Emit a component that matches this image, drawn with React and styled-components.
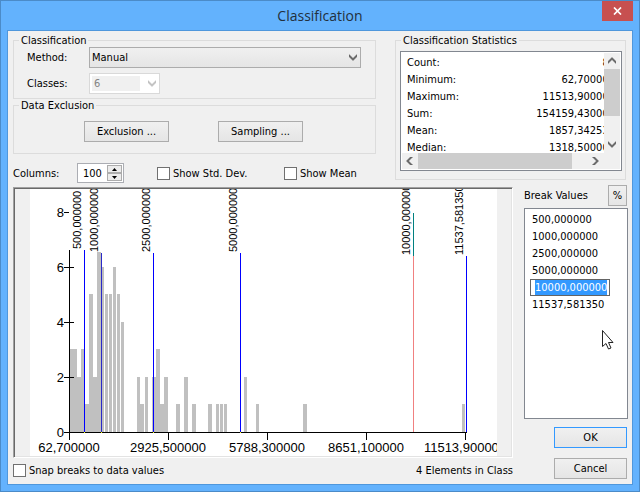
import React, { useEffect, useRef } from "react";
import styled, { createGlobalStyle } from "styled-components";

const GlobalStyle = createGlobalStyle`
  * { box-sizing: border-box; }
  body {
    margin: 0;
    color: #000;
    font: 11px/13px "DejaVu Sans Condensed", "Noto Sans", sans-serif;
  }
  button, input, select { font: inherit; color: inherit; margin: 0; }
`;

const Window = styled.main`
  position: relative;
  display: flex;
  flex-direction: column;
  min-height: 100vh;
  padding: 0 6px 6px;
  background: #63b2fd;
  border: 1px solid #4b8bc8;
`;

const TitleBar = styled.header`
  display: flex;
  justify-content: center;
  height: 29px;
`;

const Title = styled.h1`
  margin: 0;
  font: 400 14px/30px "Open Sans", sans-serif;
  color: #22303c;
`;

const CloseButton = styled.button`
  position: absolute;
  top: 0;
  right: 6px;
  width: 31px;
  height: 20px;
  padding: 0;
  border: 0;
  background: #c75050;
  display: grid;
  place-items: center;
`;

const Client = styled.div`
  flex: 1;
  padding: 3px 4px 4px 5px;
  background: #f0f0f0;
  border: 1px solid #4f97dc;
`;

const TopArea = styled.div`
  display: flex;
  gap: 19px;
  padding-right: 2px;
`;

const Settings = styled.div`
  flex: 1;
  min-width: 0;
`;

const Group = styled.fieldset`
  min-width: 0;
  margin: 0;
  padding: 0;
  border: 1px solid #dcdcdc;
`;

const GroupBody = styled.div`
  padding: ${(p) => p.$pad};
`;

const StatsGroup = styled(Group)`
  width: 231px;
  align-self: flex-start;
`;

const Legend = styled.legend`
  height: 13px;
  margin-left: 5px;
  padding: 0 2px;
`;

const Field = styled.div`
  display: flex;
  align-items: center;
  height: 21px;
  & + & { margin-top: 5px; }
`;

const FieldLabel = styled.label`
  width: 62px;
`;

const SelectBox = styled.div`
  position: relative;
  width: ${(p) => p.$width};
  height: 21px;
  svg {
    position: absolute;
    right: 4px;
    top: 7px;
    pointer-events: none;
  }
`;

const Select = styled.select`
  appearance: none;
  width: 100%;
  height: 100%;
  padding: 0 2px;
  border: 1px solid #acacac;
  border-radius: 0;
  background: linear-gradient(#f0f0f0, #e5e5e5);
  &:disabled {
    padding: 0 4px;
    color: #838383;
    opacity: 1;
    border-color: #d9d9d9;
    background: linear-gradient(#f0f0f0, #f0f0f0) 2px 2px / 48px 15px no-repeat #fff;
  }
`;

const ButtonRow = styled.div`
  display: flex;
  gap: 49px;
`;

const Button = styled.button`
  width: ${(p) => p.$width};
  height: 21px;
  padding: 0;
  border: 1px solid ${(p) => (p.$primary ? "#3399ff" : "#acacac")};
  background: linear-gradient(#f0f0f0, #e5e5e5);
`;

const OptionRow = styled.div`
  display: flex;
  align-items: center;
  height: 20px;
  margin-top: 9px;
`;

const OptionLabel = styled.label`
  width: 64px;
`;

const Spinner = styled.div`
  display: flex;
  width: 47px;
  height: 20px;
  margin-right: 33px;
  padding: 1px;
  background: #fff;
  border: 1px solid #abadb3;
`;

const SpinnerInput = styled.input`
  flex: 1;
  min-width: 0;
  padding: 0 0 0 4px;
  border: 0;
  outline: 0;
  background: none;
`;

const SpinnerButtons = styled.div`
  display: flex;
  flex-direction: column;
  width: 15px;
`;

const SpinnerButton = styled.button`
  flex: 1;
  display: grid;
  place-items: center;
  padding: 0;
  border: 1px solid #acacac;
  background: #ececec;
`;

const CheckLabel = styled.label`
  display: flex;
  align-items: center;
  gap: 3px;
  width: ${(p) => p.$width};
`;

const Checkbox = styled.input`
  appearance: none;
  width: 13px;
  height: 13px;
  background: #fff;
  border: 1px solid #707070;
`;

const StatsFrame = styled.div`
  display: grid;
  grid-template: 1fr 16px / 1fr 16px;
  height: 120px;
  padding: 1px;
  border: 1px solid #828790;
  background: #fff;
`;

const StatsView = styled.div`
  overflow: hidden;
  padding: 1px 0 0 5px;
`;

const StatsTable = styled.table`
  width: calc(100% + 11px);
  border-collapse: collapse;
  white-space: nowrap;
  th, td { height: 17px; padding: 0; }
  th { font-weight: 400; text-align: left; }
  td { text-align: right; }
`;

const ScrollBar = styled.div`
  display: flex;
  flex-direction: ${(p) => (p.$vertical ? "column" : "row")};
  background: #f0f0f0;
`;

const ScrollButton = styled.button`
  flex: 0 0 16px;
  height: 16px;
  display: grid;
  place-items: center;
  padding: 0;
  border: 0;
  background: none;
`;

const ScrollTrack = styled.div`
  flex: 1;
  display: flex;
  flex-direction: inherit;
`;

const ScrollThumb = styled.div`
  flex: 0 0 ${(p) => p.$size};
  background: #cdcdcd;
`;

const Corner = styled.div`
  background: #f0f0f0;
`;

const BottomArea = styled.div`
  display: flex;
  gap: 11px;
  margin-top: 2px;
`;

const ChartColumn = styled.section`
  flex: 1;
  min-width: 0;
  padding-top: 2px;
`;

const ChartFrame = styled.div`
  padding: 1px 15px 1px 16px;
  border: 1px solid;
  border-color: #a0a0a0 #fff #fff #a0a0a0;
  box-shadow: inset 1px 1px #696969, inset -1px -1px #e3e3e3;
  svg {
    display: block;
    width: 100%;
    background: #fff;
  }
`;

const StatusRow = styled.div`
  display: flex;
  justify-content: space-between;
  align-items: center;
  margin-top: 6px;
`;

const BreakColumn = styled.section`
  display: flex;
  flex-direction: column;
  width: 104px;
`;

const BreakHeader = styled.div`
  display: flex;
  align-items: center;
  justify-content: space-between;
  padding-right: 1px;
  margin-bottom: 2px;
  white-space: nowrap;
`;

const BreakList = styled.ul`
  height: 211px;
  margin: 0 0 8px;
  padding: 2px 5px;
  list-style: none;
  border: 1px solid #828790;
  background: #fff;
`;

const BreakItem = styled.li`
  height: 17px;
  line-height: 17px;
  padding-left: ${(p) => (p.$editing ? "0" : "2px")};
`;

const BreakInput = styled.input`
  display: block;
  width: 80px;
  height: 17px;
  padding: 0 0 0 4px;
  border: 1px solid #646464;
  outline: 0;
  background: #fff;
  &::selection { background: #3399ff; color: #fff; }
`;

const Actions = styled.div`
  display: flex;
  flex-direction: column;
  align-items: flex-end;
  gap: 10px;
  padding-right: 1px;
`;

const Pointer = styled.svg`
  position: absolute;
  left: 600px;
  top: 328px;
  pointer-events: none;
`;

const arrows = {
  up: "M0 6.5 4 2.5 8 6.5V4.5L4 .5 0 4.5Z",
  down: "M0 .5 4 4.5 8 .5V2.5L4 6.5 0 2.5Z",
  left: "M6.5 0 2.5 4 6.5 8H4.5L.5 4 4.5 0Z",
  right: "M.5 0 4.5 4 .5 8H2.5L6.5 4 2.5 0Z",
};

const Arrow = ({ dir, color = "#606060" }) => (
  <svg width="8" height="8" viewBox="0 0 8 8" aria-hidden="true">
    <path d={arrows[dir]} fill={color} stroke={color} strokeWidth="0.6" />
  </svg>
);

const stats = [
  ["Count:", "83"],
  ["Minimum:", "62,700000"],
  ["Maximum:", "11513,900000"],
  ["Sum:", "154159,430000"],
  ["Mean:", "1857,342530"],
  ["Median:", "1318,500000"],
];

const breaks = ["500,000000", "1000,000000", "2500,000000", "5000,000000", "10000,000000", "11537,581350"];

// [left, width, element count]
const bars = [
  [40, 7, 3], [47, 4, 2], [51, 4, 3], [55, 4, 1], [59, 4, 5], [63, 4, 2], [67, 4, 6.55],
  [71, 3, 6], [75, 3, 5], [79, 3, 5], [83, 3, 6], [87, 3, 5], [91, 3, 4],
  [107, 3, 2], [110, 4, 1], [115, 3, 2], [122, 4, 2], [126, 4, 3], [130, 4, 1], [134, 4, 2],
  [146, 4, 1], [154, 4, 2], [162, 4, 1], [178, 4, 1], [186, 3, 1], [190, 3, 1], [194, 3, 1],
  [214, 3, 2], [226, 3, 1], [273, 4, 1], [432, 3, 1],
];

// x of the line, its top, label baseline x and label bottom
const breakLines = [
  [54, 61, 51, 60], [71, 64, 68, 63], [123, 64, 120, 63],
  [210, 64, 207, 63], [383, 67, 380, 66], [436, 67, 433, 66],
];

const yTicks = [[8, 23], [6, 78], [4, 133], [2, 188], [0, 243]];
const xTicks = [[39, "62,700000"], [138, "2925,500000"], [237, "5788,300000"], [336, "8651,100000"], [435, "11513,900000"]];

const UNIT = 27.5;
const BASE = 243;

function Histogram() {
  return (
    <svg viewBox="0 0 467 267" role="img" aria-label="Histogram" fontFamily='"Liberation Sans", Arial, sans-serif'>
      <g fill="#c0c0c0" shapeRendering="crispEdges">
        {bars.map(([x, w, n]) => {
          const h = Math.round(n * UNIT);
          return <rect key={x} x={x} y={BASE - h} width={w} height={h} />;
        })}
      </g>
      <g shapeRendering="crispEdges">
        <rect x="39" y="61" width="1" height="190" />
        <rect x="34" y={BASE} width="403" height="1" />
        {yTicks.map(([n, y]) => (
          <rect key={n} x="34" y={y} width={n === 8 ? 5 : 10} height="1" />
        ))}
        {xTicks.map(([x]) => (
          <rect key={x} x={x} y={BASE} width="1" height="8" />
        ))}
      </g>
      <g shapeRendering="crispEdges">
        {breakLines.map(([x, top], i) =>
          i === 4 ? (
            <g key={x}>
              <rect x={x} y="24" width="1" height="43" fill="#008080" />
              <rect x={x} y={top} width="1" height={BASE - top} fill="#f08080" />
            </g>
          ) : (
            <g key={x}>
              <rect x={x} y={top} width="1" height={BASE - top} fill={i === 1 ? "#2a2ac8" : "#0000ff"} />
              {i < 5 && <rect x={x} y={BASE} width="1" height="1" fill="#ffff00" />}
            </g>
          )
        )}
      </g>
      <g fontSize="11">
        {breakLines.map(([x, , lx, ly], i) => (
          <text key={x} transform={`translate(${lx} ${ly}) rotate(-90)`}>{breaks[i]}</text>
        ))}
      </g>
      <g fontSize="13">
        {yTicks.map(([n, y]) => (
          <text key={n} x="34" y={y + 5} textAnchor="end">{n}</text>
        ))}
        {xTicks.map(([x, t]) => (
          <text key={t} x={x} y="263" textAnchor="middle">{t}</text>
        ))}
      </g>
    </svg>
  );
}

export default function App() {
  const editRef = useRef(null);
  useEffect(() => {
    editRef.current.focus();
    editRef.current.select();
  }, []);

  return (
    <>
      <GlobalStyle />
      <Window>
        <TitleBar>
          <Title>Classification</Title>
          <CloseButton aria-label="Close">
            <svg width="9" height="8" viewBox="0 0 9 8" aria-hidden="true">
              <path d="M1 .5 8 7.5M8 .5 1 7.5" stroke="#fff" strokeWidth="1.7" />
            </svg>
          </CloseButton>
        </TitleBar>
        <Client>
          <TopArea>
            <Settings>
              <Group>
                <Legend>Classification</Legend>
                <GroupBody $pad="0 14px 4px 13px">
                  <Field>
                    <FieldLabel htmlFor="method">Method:</FieldLabel>
                    <SelectBox $width="calc(100% - 62px)">
                      <Select id="method"><option>Manual</option></Select>
                      <Arrow dir="down" />
                    </SelectBox>
                  </Field>
                  <Field>
                    <FieldLabel htmlFor="classes">Classes:</FieldLabel>
                    <SelectBox $width="71px">
                      <Select id="classes" disabled><option>6</option></Select>
                      <Arrow dir="down" color="#bfbfbf" />
                    </SelectBox>
                  </Field>
                </GroupBody>
              </Group>
              <Group>
                <Legend>Data Exclusion</Legend>
                <GroupBody $pad="9px 0 11px 70px">
                  <ButtonRow>
                    <Button $width="85px">Exclusion ...</Button>
                    <Button $width="85px">Sampling ...</Button>
                  </ButtonRow>
                </GroupBody>
              </Group>
              <OptionRow>
                <OptionLabel htmlFor="columns">Columns:</OptionLabel>
                <Spinner>
                  <SpinnerInput id="columns" defaultValue="100" />
                  <SpinnerButtons>
                    <SpinnerButton aria-label="More columns">
                      <svg width="5" height="3" aria-hidden="true"><path d="M0 3 2.5 0 5 3Z" /></svg>
                    </SpinnerButton>
                    <SpinnerButton aria-label="Fewer columns">
                      <svg width="5" height="3" aria-hidden="true"><path d="M0 0 2.5 3 5 0Z" /></svg>
                    </SpinnerButton>
                  </SpinnerButtons>
                </Spinner>
                <CheckLabel $width="127px"><Checkbox type="checkbox" />Show Std. Dev.</CheckLabel>
                <CheckLabel><Checkbox type="checkbox" />Show Mean</CheckLabel>
              </OptionRow>
            </Settings>
            <StatsGroup>
              <Legend>Classification Statistics</Legend>
              <GroupBody $pad="4px 3px 8px 4px">
                <StatsFrame>
                  <StatsView>
                    <StatsTable>
                      <tbody>
                        {stats.map(([name, value]) => (
                          <tr key={name}><th scope="row">{name}</th><td>{value}</td></tr>
                        ))}
                      </tbody>
                    </StatsTable>
                  </StatsView>
                  <ScrollBar $vertical>
                    <ScrollButton aria-label="Scroll up"><Arrow dir="up" /></ScrollButton>
                    <ScrollTrack><ScrollThumb $size="47px" /></ScrollTrack>
                    <ScrollButton aria-label="Scroll down"><Arrow dir="down" /></ScrollButton>
                  </ScrollBar>
                  <ScrollBar>
                    <ScrollButton aria-label="Scroll left"><Arrow dir="left" /></ScrollButton>
                    <ScrollTrack><ScrollThumb $size="154px" /></ScrollTrack>
                    <ScrollButton aria-label="Scroll right"><Arrow dir="right" /></ScrollButton>
                  </ScrollBar>
                  <Corner />
                </StatsFrame>
              </GroupBody>
            </StatsGroup>
          </TopArea>
          <BottomArea>
            <ChartColumn>
              <ChartFrame><Histogram /></ChartFrame>
              <StatusRow>
                <CheckLabel><Checkbox type="checkbox" />Snap breaks to data values</CheckLabel>
                <span>4 Elements in Class</span>
              </StatusRow>
            </ChartColumn>
            <BreakColumn>
              <BreakHeader>
                <span>Break Values</span>
                <Button $width="19px">%</Button>
              </BreakHeader>
              <BreakList>
                {breaks.map((b, i) => (
                  <BreakItem key={b} $editing={i === 4}>
                    {i === 4 ? <BreakInput ref={editRef} aria-label="Break value" defaultValue={b} /> : b}
                  </BreakItem>
                ))}
              </BreakList>
              <Actions>
                <Button $width="73px" $primary>OK</Button>
                <Button $width="73px">Cancel</Button>
              </Actions>
            </BreakColumn>
          </BottomArea>
        </Client>
        <Pointer width="13" height="21" viewBox="0 0 13 21" aria-hidden="true">
          <path d="M1.500 1.500V17.500L5 14.500 7.500 20 10 19 7.500 13.500H12Z" fill="#fff" stroke="#222" />
        </Pointer>
      </Window>
    </>
  );
}
